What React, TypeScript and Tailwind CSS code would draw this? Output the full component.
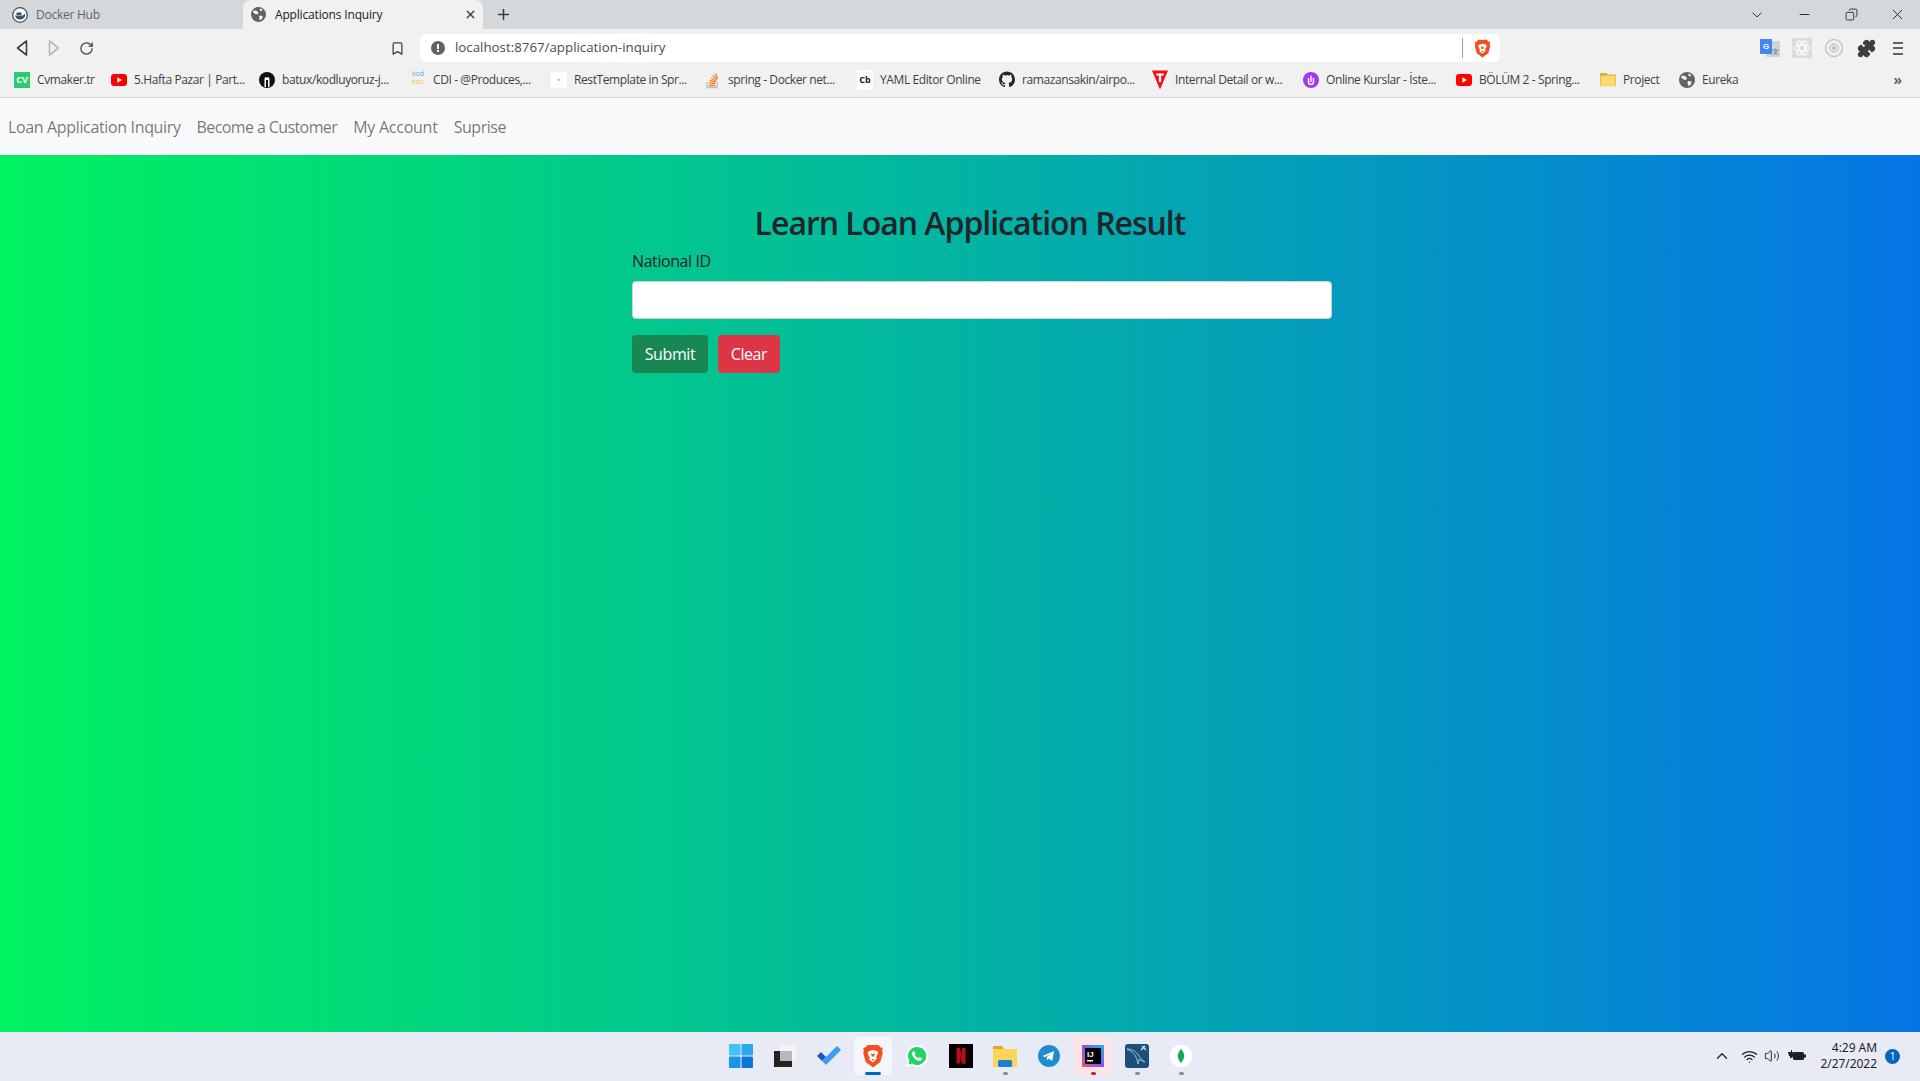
import React from "react";
import { ChevronDown, ChevronUp, Minus, Plus, RotateCw, X, Bookmark, Puzzle, Wifi, Volume2, Copy } from "lucide-react";

const font = "font-['Open_Sans','Noto_Sans',sans-serif]";

const Tri = ({ dir, color }: { dir: "l" | "r"; color: string }) => (
  <svg width="16" height="18" viewBox="0 0 16 18" fill="none" stroke={color} strokeWidth="1.6" strokeLinejoin="round">
    {dir === "l" ? <path d="M12.5 2 3.5 9l9 7z" /> : <path d="M3.5 2l9 7-9 7z" />}
  </svg>
);

const Globe = ({ size = 16, color = "#5f6368" }: { size?: number; color?: string }) => (
  <svg width={size} height={size} viewBox="0 0 16 16">
    <circle cx="8" cy="8" r="8" fill={color} />
    <path d="M3 3.5l3 .5 2 2-1 2-2.5-.5L2 5.5zM9 9l3.5.5-.5 3-2.5 1.5L8.500 11zM9.500 1.500l2.500 1-.5 2-2-.5z" fill="#f1f1f2" />
  </svg>
);

const BraveLogo = ({ size = 20 }: { size?: number }) => (
  <svg width={size} height={size} viewBox="0 0 20 22">
    <path d="M5 1h10l2 2.200 2 .3-.6 3 .6 1.500-2.300 8.500L10 21.500 3.300 16.500 1 8l.6-1.500L1 3.500l2-.3z" fill="#f1501f" />
    <path d="M6.500 6.500 10 5.500l3.500 1 1.500 1.500-2 3.500.5 2L10 17l-3.500-2.500.5-2L5 8z" fill="#fff" />
    <path d="M8 8.500 10 9.500l2-1-1 3h-2zM8.500 14h3L10 15.500z" fill="#f1501f" />
  </svg>
);

const Yt = () => (
  <svg width="16" height="12" viewBox="0 0 16 12">
    <rect width="16" height="12" rx="3" fill="#f00" />
    <path d="M6.300 3.300 11 6l-4.700 2.700z" fill="#fff" />
  </svg>
);

const GithubCat = () => (
  <svg width="17" height="17" viewBox="0 0 16 16" fill="#24292f">
    <path d="M8 0C3.580 0 0 3.580 0 8c0 3.540 2.290 6.530 5.470 7.590.4.070.55-.17.55-.38 0-.19-.01-.82-.01-1.490-2.010.37-2.530-.49-2.690-.94-.09-.23-.48-.94-.82-1.130-.28-.15-.68-.52-.01-.53.63-.01 1.080.58 1.230.82.720 1.210 1.870.870 2.330.660.070-.52.280-.870.510-1.070-1.780-.2-3.640-.89-3.640-3.950 0-.870.310-1.590.820-2.150-.08-.2-.36-1.020.08-2.120 0 0 .670-.210 2.200.820.640-.180 1.320-.270 2-.270s1.360.090 2 .270c1.530-1.040 2.200-.820 2.200-.820.440 1.100.160 1.920.080 2.120.510.560.820 1.270.820 2.150 0 3.070-1.870 3.750-3.650 3.950.290.250.540.730.540 1.480 0 1.070-.010 1.930-.010 2.200 0 .210.150.460.550.380A8.010 8.010 0 0 0 16 8c0-4.420-3.580-8-8-8z" />
  </svg>
);

const icons: Record<string, React.ReactNode> = {
  cv: <div className="w-4 h-4 bg-[#2ecc71] text-white text-[9px] font-bold leading-4 text-center">CV</div>,
  yt: <Yt />,
  gh1: (
    <svg width="16" height="16" viewBox="0 0 16 16">
      <circle cx="8" cy="8" r="8" fill="#111" />
      <path d="M5.500 15V7.500C5.500 5 7 4 8 6c1-2 2.500-1 2.500 1.500V15H9V8H7v7z" fill="#fff" />
    </svg>
  ),
  kod: <div className="w-4 h-5 text-[7px] leading-[8px] text-center"><span className="text-[#5aa9e6] block">kod</span><span className="text-[#f5c451] block">edu</span></div>,
  rest: <div className="w-4 h-4 bg-white text-[6px] text-[#e8603c] leading-4 text-center">≈</div>,
  so: (
    <svg width="14" height="18" viewBox="0 0 14 18" fill="none" stroke="#f48024" strokeWidth="1.400">
      <path d="M1 11v5.500h10V11" stroke="#bcbbbb" />
      <path d="M3 14.500h6M3.200 12l6 .6M3.800 9.500l5.800 1.600M5 7l5.200 3M7 4.500l4 4.200M9.500 2.500l2 5" />
    </svg>
  ),
  cb: <div className="w-4 h-5 bg-white text-[#222] text-[9px] font-bold leading-5 text-center">Cb</div>,
  gh2: <GithubCat />,
  t: (
    <svg width="17" height="20" viewBox="0 0 17 20">
      <path d="M0 0h17L8.500 20z" fill="#f40f1b" />
      <path d="M4.500 3h8v2.200H9.700V12H7.300V5.200H4.500z" fill="#fff" />
    </svg>
  ),
  u: (
    <svg width="16" height="16" viewBox="0 0 16 16">
      <circle cx="8" cy="8" r="8" fill="#a435f0" />
      <path d="M5.500 6v4a2.500 2.500 0 0 0 5 0V6" fill="none" stroke="#fff" strokeWidth="1.500" />
      <path d="M8 3.500V10" stroke="#fff" strokeWidth="1.300" />
    </svg>
  ),
  folder: (
    <svg width="16" height="15" viewBox="0 0 16 15">
      <path d="M0 2a1 1 0 0 1 1-1h5l1.500 1.500H15a1 1 0 0 1 1 1V14H0z" fill="#d9a93a" />
      <rect x="0.500" y="3.500" width="15" height="11" rx="1" fill="#fcd872" />
    </svg>
  ),
  globe: <Globe />,
};

const bookmarks = [
  { i: "cv", t: "Cvmaker.tr", w: "w-[57px]" },
  { i: "yt", t: "5.Hafta Pazar | Part...", w: "w-[108px]" },
  { i: "gh1", t: "batux/kodluyoruz-j...", w: "w-[111px]" },
  { i: "kod", t: "CDI - @Produces,...", w: "w-[101px]" },
  { i: "rest", t: "RestTemplate in Spr...", w: "w-[114px]" },
  { i: "so", t: "spring - Docker net...", w: "w-[112px]" },
  { i: "cb", t: "YAML Editor Online", w: "w-[102px]" },
  { i: "gh2", t: "ramazansakin/airpo...", w: "w-[113px]" },
  { i: "t", t: "Internal Detail or w...", w: "w-[111px]" },
  { i: "u", t: "Online Kurslar - İste...", w: "w-[113px]" },
  { i: "yt", t: "BÖLÜM 2 - Spring...", w: "w-[104px]" },
  { i: "folder", t: "Project", w: "w-[39px]" },
  { i: "globe", t: "Eureka", w: "w-[37px]" },
];

const Dot = ({ c, w = "w-[5px]" }: { c: string; w?: string }) => <div className={`h-[3px] rounded ${w} ${c}`} />;

const TaskItem = ({ children, active, bar, pink }: { children: React.ReactNode; active?: boolean; bar?: React.ReactNode; pink?: boolean }) => (
  <div className={`relative w-[38px] h-[38px] rounded flex items-center justify-center ${active ? "bg-[#f5f6fb]" : ""} ${pink ? "bg-[#fde4e6]" : ""}`}>
    {children}
    {bar && <div className="absolute bottom-[0px] left-0 right-0 flex justify-center">{bar}</div>}
  </div>
);

export default function App() {
  return (
    <div className={`${font} w-full h-[1081px] flex flex-col overflow-hidden`}>
      {/* tab strip */}
      <div className="h-[29px] bg-[#d5d8db] flex items-end shrink-0 relative">
        <div className="w-[243px] h-[29px] flex items-center pl-3 gap-2 text-[12px] text-[#5f6368]">
          <svg width="16" height="16" viewBox="0 0 16 16">
            <circle cx="8" cy="8" r="7.300" fill="#fff" stroke="#33566e" strokeWidth="1.300" />
            <path d="M3 8.500h7.500c.8 0 1.500-.8 1.700-1.500l1.300.5C13 10.500 11 12.500 8 12.500c-3 0-4.500-2-5-4z" fill="#33566e" />
            <rect x="4.500" y="5.500" width="5" height="2.500" fill="#33566e" />
          </svg>
          <span className="tracking-[-0.25px]">Docker Hub</span>
        </div>
        <div className="w-[240px] h-[29px] bg-[#f1f1f2] rounded-t-lg flex items-center pl-2 pr-[6px] text-[12px] text-[#202124]">
          <Globe size={15} />
          <span className="ml-[9px] flex-1 tracking-[-0.17px]">Applications Inquiry</span>
          <X size={13} strokeWidth={2.500} className="text-[#3c4043]" />
        </div>
        <div className="ml-3 h-[29px] flex items-center"><Plus size={17} strokeWidth={2.200} className="text-[#3c4043]" /></div>
        <div className="ml-auto h-[29px] flex items-center text-[#2b2d30]">
          <ChevronDown size={16} strokeWidth={1.400} />
          <Minus size={15} strokeWidth={1.800} className="ml-[32px]" />
          <Copy size={13} strokeWidth={1.700} className="ml-[33px] -scale-x-100" />
          <X size={17} strokeWidth={1.400} className="ml-[31px] mr-[14px]" />
        </div>
      </div>

      {/* toolbar */}
      <div className="h-[33px] pt-[5px] bg-[#f1f1f2] flex items-center shrink-0 relative">
        <div className="ml-[14px]"><Tri dir="l" color="#3c4043" /></div>
        <div className="ml-[16px]"><Tri dir="r" color="#b5b7ba" /></div>
        <RotateCw size={15} strokeWidth={2} className="ml-[17px] text-[#3c4043]" />
        <Bookmark size={15} strokeWidth={2} className="ml-[296px] text-[#3c4043]" />
        <div className="ml-[15px] w-[1080px] h-[28px] bg-white rounded-md flex items-center pl-[11px] pr-[8px] text-[13.300px] text-[#4a4d52]">
          <svg width="14" height="14" viewBox="0 0 14 14">
            <circle cx="7" cy="7" r="7" fill="#5f6368" />
            <rect x="6" y="3" width="2" height="5" fill="#fff" />
            <rect x="6" y="9" width="2" height="2" fill="#fff" />
          </svg>
          <span className="ml-[10px] flex-1">localhost:8767/application-inquiry</span>
          <div className="w-px h-5 bg-[#9aa0a6] mr-[10px]" />
          <BraveLogo size={19} />
        </div>
        <div className="ml-auto flex items-center gap-[12px]">
          <svg width="20" height="20" viewBox="0 0 20 20" className="-translate-x-px">
            <rect x="6" y="3" width="14" height="16" fill="#d0d3d6" />
            <path d="M0 1h12v15H0z" fill="#4285f4" />
            <text x="3" y="11" fontSize="8" fontWeight="700" fill="#fff" fontFamily="Liberation Sans">G</text>
            <text x="12" y="16" fontSize="7" fill="#3c6e71" fontFamily="Liberation Sans">文</text>
          </svg>
          <svg width="20" height="20" viewBox="0 0 20 20" fill="none" stroke="#fff" className="-translate-x-px">
            <rect width="20" height="20" fill="#dcdcdc" stroke="none" />
            <ellipse cx="10" cy="10" rx="8" ry="3" />
            <ellipse cx="10" cy="10" rx="8" ry="3" transform="rotate(60 10 10)" />
            <ellipse cx="10" cy="10" rx="8" ry="3" transform="rotate(120 10 10)" />
          </svg>
          <svg width="20" height="20" viewBox="0 0 20 20" fill="none" stroke="#c4c6c8" strokeWidth="1.500" className="-translate-x-px">
            <circle cx="10" cy="10" r="8.500" />
            <circle cx="10" cy="10" r="4" />
            <circle cx="10" cy="10" r="1.500" fill="#c4c6c8" />
          </svg>
          <Puzzle size={19} className="text-[#3c4043] fill-[#3c4043]" />
          <div className="ml-[5px] flex flex-col gap-[3.500px] w-[10px] mr-[17px]">
            <div className="h-[2px] bg-[#5f6368]" />
            <div className="h-[2px] bg-[#5f6368]" />
            <div className="h-[2px] bg-[#5f6368]" />
          </div>
        </div>
      </div>

      {/* bookmarks */}
      <div className="h-[36px] bg-[#f1f1f2] border-b border-[#d5d8db] flex items-center pl-[14px] shrink-0 text-[12px] text-[#3c4043]">
        {bookmarks.map((b, i) => (
          <div key={i} className="flex items-center mr-[17px]">
            <div className="w-[16px] h-[20px] flex items-center justify-center shrink-0">{icons[b.i]}</div>
            <span className={`ml-[7px] whitespace-nowrap tracking-[-0.4px] ${b.w}`}>{b.t}</span>
          </div>
        ))}
        <span className="ml-auto mr-[18px] font-bold text-[14px] text-[#5f6368] leading-none">»</span>
      </div>

      {/* navbar */}
      <div className="h-[57px] bg-[#f8f9fa] flex items-center shrink-0 text-[16px] text-[#0000008c]">
        <a className="px-[8px] tracking-[-0.35px]">Loan Application Inquiry</a>
        <a className="px-[8px] tracking-[-0.6px]">Become a Customer</a>
        <a className="px-[8px] tracking-[-0.25px]">My Account</a>
        <a className="px-[8px] tracking-[-0.45px]">Suprise</a>
      </div>

      {/* page */}
      <div className="flex-1 bg-[linear-gradient(to_right,#00f260,#0575e6)] pl-[632px] pt-[47px] text-[#212529]">
        <div className="w-[700px]">
          <h2 className="w-[676px] text-center text-[32px] leading-[42px] font-semibold tracking-[-1.02px]">Learn Loan Application Result</h2>
          <label className="block mt-[7px] text-[16px] leading-[20px] tracking-[-0.42px]">National ID</label>
          <div className="mt-[10px] h-[38px] bg-white border border-[#ced4da] rounded" />
          <div className="mt-[16px] flex gap-[10px]">
            <button className="w-[76px] h-[38px] rounded bg-[#198754] text-white text-[16px] tracking-[-0.4px]">Submit</button>
            <button className="w-[62px] h-[38px] rounded bg-[#dc3545] text-white text-[16px] tracking-[-0.4px]">Clear</button>
          </div>
        </div>
      </div>

      {/* taskbar */}
      <div className="h-[49px] pb-[2px] bg-[#e8ebf5] border-t border-[#e9ebf2] flex items-center shrink-0 relative">
        <div className="ml-[722px] flex items-center gap-[6px]">
          <TaskItem>
            <svg width="24" height="24" viewBox="0 0 24 24">
              <rect x="0" y="0" width="11.500" height="11.500" fill="#3fc2f5" rx="1" />
              <rect x="12.500" y="0" width="11.500" height="11.500" fill="#2aa8ed" rx="1" />
              <rect x="0" y="12.500" width="11.500" height="11.500" fill="#1b96e5" rx="1" />
              <rect x="12.500" y="12.500" width="11.500" height="11.500" fill="#0c77d5" rx="1" />
            </svg>
          </TaskItem>
          <TaskItem>
            <svg width="24" height="24" viewBox="0 0 24 24">
              <rect x="1" y="7" width="18" height="16" fill="#222" />
              <rect x="7" y="1" width="16" height="16" fill="#f4f4f5" />
              <rect x="7" y="7" width="12" height="10" fill="#b9b9b9" />
            </svg>
          </TaskItem>
          <TaskItem>
            <svg width="26" height="22" viewBox="0 0 26 22">
              <path d="M1 11 5 7l5 5-4 4z" fill="#2255c4" />
              <path d="M6 16 21 1l4 4-15 15z" fill="#3d9bf0" />
            </svg>
          </TaskItem>
          <TaskItem active bar={<Dot c="bg-[#0067c0]" w="w-[16px]" />}>
            <BraveLogo size={24} />
          </TaskItem>
          <TaskItem>
            <svg width="24" height="24" viewBox="0 0 24 24">
              <path d="M12 1a11 11 0 0 0-9.500 16.500L1 23l5.700-1.500A11 11 0 1 0 12 1z" fill="#fff" />
              <path d="M12 3a9 9 0 0 0-7.700 13.700L3.500 20.500l3.800-1A9 9 0 1 0 12 3z" fill="#25d366" />
              <path d="M8.500 7c1-.5 1.500 1.500 2 2.500l-.8 1.200c.8 1.500 2 2.600 3.500 3.300l1.200-1c1 .5 2.500 1 2.500 1.700 0 1.300-1.500 2.300-3 2-3-.5-6.500-3.800-7-7C7.200 8.500 7.800 7.300 8.500 7z" fill="#fff" />
            </svg>
          </TaskItem>
          <TaskItem>
            <svg width="24" height="24" viewBox="0 0 24 24">
              <rect width="24" height="24" fill="#000" />
              <path d="M7.500 4h3.500l2 8V4h3.500v16l-3.500-.6-2-7.400v7.200l-3.500.5z" fill="#c00c14" />
            </svg>
          </TaskItem>
          <TaskItem bar={<Dot c="bg-[#8a8e96]" />}>
            <svg width="24" height="22" viewBox="0 0 24 22">
              <path d="M0 1h9l2 3h13v18H0z" fill="#e2a81f" />
              <rect y="4" width="24" height="18" fill="#fcd65a" />
              <rect x="5" y="15" width="14" height="7" rx="1.500" fill="#1a7fd4" />
            </svg>
          </TaskItem>
          <TaskItem>
            <svg width="22" height="22" viewBox="0 0 22 22">
              <circle cx="11" cy="11" r="11" fill="#1f8dcc" />
              <path d="M4.500 11 16 6l-1.800 10-3.500-2.500-1.700 1.700-.3-3.200L14 8l-7 4z" fill="#fff" />
            </svg>
          </TaskItem>
          <TaskItem pink bar={<Dot c="bg-[#c4262e]" />}>
            <svg width="22" height="22" viewBox="0 0 22 22">
              <defs>
                <linearGradient id="ij" x1="0" y1="1" x2="1" y2="0">
                  <stop offset="0" stopColor="#fc4a7f" />
                  <stop offset="0.5" stopColor="#7b5bf2" />
                  <stop offset="1" stopColor="#1fb4f4" />
                </linearGradient>
              </defs>
              <rect width="22" height="22" fill="url(#ij)" />
              <rect x="3" y="3" width="16" height="16" fill="#000" />
              <text x="5" y="12" fontSize="8" fontWeight="700" fill="#fff" fontFamily="Liberation Sans">IJ</text>
              <rect x="5" y="15" width="6" height="1.500" fill="#fff" />
            </svg>
          </TaskItem>
          <TaskItem bar={<Dot c="bg-[#8a8e96]" />}>
            <svg width="24" height="24" viewBox="0 0 24 24" fill="none">
              <rect width="24" height="24" rx="3" fill="#1d4f78" />
              <path d="M2 5c5 0 9 2 12 7 1 2 3 4 6 6-3-1-5-2-6-3l-1 5c-1-3-1-5-2-7C9 9 6 7 2 5z" stroke="#9fc0d8" strokeWidth="1" />
              <path d="M17 2l4 4M20 2l-4 4" stroke="#d5e3ec" strokeWidth="1.300" />
            </svg>
          </TaskItem>
          <TaskItem bar={<Dot c="bg-[#8a8e96]" />}>
            <svg width="22" height="22" viewBox="0 0 22 22">
              <circle cx="11" cy="11" r="11" fill="#fff" />
              <path d="M11 4c2.500 3 3.300 5 3.300 7S13 15 11 18c-2-3-3.300-5-3.300-7S8.500 7 11 4z" fill="#13aa52" />
            </svg>
          </TaskItem>
        </div>
        <div className="ml-auto flex items-center text-[#1f1f1f]">
          <ChevronUp size={18} strokeWidth={1.600} />
          <Wifi size={17} strokeWidth={1.800} className="ml-[10px]" />
          <Volume2 size={16} strokeWidth={1.400} className="ml-[6px]" />
          <svg width="18" height="14" viewBox="0 0 18 14" className="ml-[8px]" fill="#1f1f1f">
            <path d="M0 3h3V1h1v2h1v4a2 2 0 0 1-2 2H2V7H1z" />
            <rect x="5" y="3" width="11" height="8" rx="1.500" />
            <rect x="16" y="5.500" width="2" height="3" />
          </svg>
          <div className="ml-[3px] w-[68px] text-right text-[12px] leading-[16px] font-['Noto_Sans',sans-serif] tracking-[-0.05px]">
            <div>4:29 AM</div>
            <div>2/27/2022</div>
          </div>
          <div className="ml-[8px] mr-[20px] w-[15px] h-[15px] rounded-full bg-[#0067c0] text-white text-[10px] leading-[15px] text-center">1</div>
        </div>
      </div>
    </div>
  );
}
